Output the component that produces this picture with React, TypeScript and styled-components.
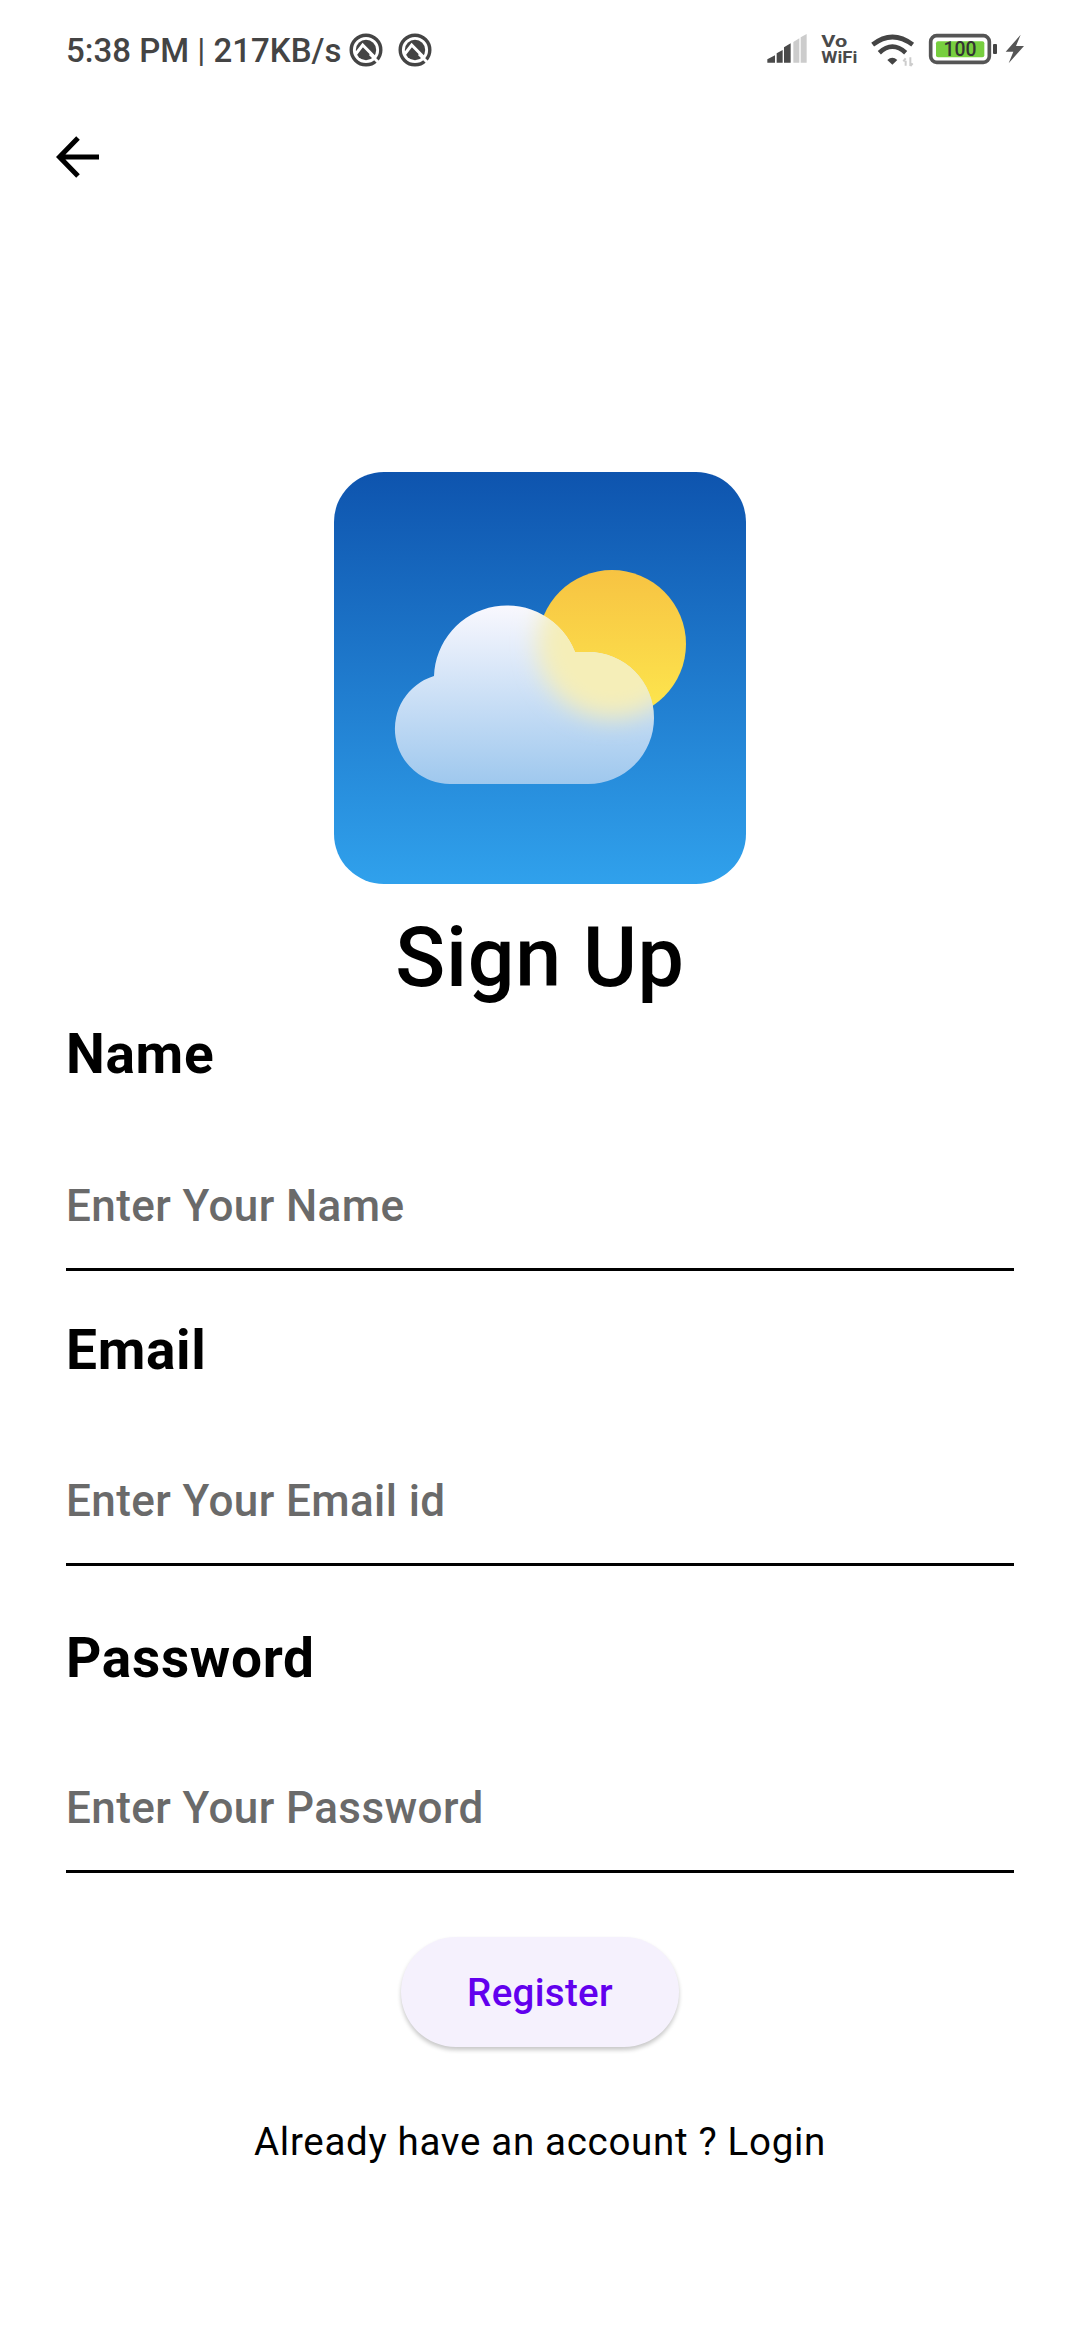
import React from "react";
import styled, { createGlobalStyle } from "styled-components";

const Global = createGlobalStyle`
  html, body { margin: 0; padding: 0; background: #fff; }
  #root { width: 1080px; height: 2340px; }
`;
const Page = styled.div`
  width: 1080px; height: 2340px; background: #fff; overflow: hidden;
  font-family: Roboto, "Liberation Sans", sans-serif; display: flex; flex-direction: column;
`;
const StatusBar = styled.div`
  height: 100px; flex: none; box-sizing: border-box; padding: 0 30px 0 66px; display: flex; align-items: center;
  color: #444; font-size: 33px; font-weight: 500; justify-content: space-between;
`;
const StatusLeft = styled.div`display: flex; align-items: center; white-space: pre;`;
const Thin = styled.span`font-weight: 400;`;
const BlockIcon = styled.svg<{ $ml: number }>`width: 36px; height: 36px; margin-left: ${(p) => p.$ml}px;`;
const BackRow = styled.div`height: 372px; flex: none; box-sizing: border-box; padding: 34px 0 0 52px;`;
const BackIcon = styled.svg`width: 50px; height: 50px; display: block;`;
const Logo = styled.svg`width: 412px; height: 412px; display: block; align-self: center; flex: none;`;
const Title = styled.h1`
  margin: 25px 0 16px; text-align: center; font-size: 82.5px; line-height: 97px; font-weight: 500; color: #000; letter-spacing: .69px;
`;
const Form = styled.div`padding: 0 66px; display: flex; flex-direction: column;`;
const Label = styled.div`font-size: 55px; font-weight: 700; line-height: 64px; color: #000; letter-spacing: .69px;`;
const Field = styled.div<{ $h: number; $mb: number }>`
  height: ${(p) => p.$h}px; box-sizing: border-box; border-bottom: 3px solid #000; display: flex; align-items: flex-end;
  padding-bottom: 36px; margin-bottom: ${(p) => p.$mb}px;
`;
const Input = styled.input`
  border: 0; outline: 0; padding: 0; width: 100%; background: transparent;
  font: 500 44px/52px Roboto, sans-serif; letter-spacing: .41px; height: 52px;
  &::placeholder { color: #6a6a6a; opacity: 1; }
`;
const RegisterWrap = styled.div`display: flex; justify-content: center; margin-top: 64px;`;
const Register = styled.button`
  width: 278px; height: 110px; padding: 0; border: 0; border-radius: 55px; background: #f5f1fd; color: #6200ee;
  font: 500 38.5px Roboto, sans-serif; letter-spacing: .3px; box-shadow: 0 3px 4px rgba(0,0,0,.22);
`;
const Footer = styled.div`text-align: center; margin-top: 72px; font-size: 38.5px; line-height: 45px; color: #000; letter-spacing: .69px;`;
const Icons = styled.svg`width: 310px; height: 60px; display: block;`;

const Block = ({ ml }: { ml: number }) => (
  <BlockIcon $ml={ml} viewBox="0 0 36 36" fill="none">
    <circle cx="18" cy="18" r="14.8" stroke="#444" strokeWidth="3.4" />
    <circle cx="18" cy="18" r="10.2" fill="#444" />
    <path d="M7 23 L14.7 13 L27 25.5" stroke="#fff" strokeWidth="3" />
    <path d="M22 22 L34 34" stroke="#fff" strokeWidth="3" />
  </BlockIcon>
);

export default function App() {
  return (
    <Page>
      <Global />
      <StatusBar>
        <StatusLeft>
          5:38 PM <Thin>|</Thin> 217KB/s
          <Block ml={7} />
          <Block ml={13} />
        </StatusLeft>
        <Icons viewBox="0 0 930 180">
          <path d="M82 128 V118 L105 106 V128 Z M110 128 V100 L128 90 V128 Z M132 128 V82 L152 70 V128 Z" fill="#4a4a4a" />
          <path d="M160 128 V66 L178 55 V128 Z M182 128 V52 L200 42 V128 Z" fill="#ccc" />
          <text x="244" y="80" textLength="78" lengthAdjust="spacingAndGlyphs" fontFamily="Roboto" fontWeight="700" fontSize="50" fill="#4a4a4a">Vo</text>
          <text x="244" y="130" textLength="108" lengthAdjust="spacingAndGlyphs" fontFamily="Roboto" fontWeight="700" fontSize="52" fill="#4a4a4a">WiFi</text>
          <path d="M398 74 Q457 28 518 74" fill="none" stroke="#444" strokeWidth="14" />
          <path d="M418 98 Q457 62 497 98" fill="none" stroke="#444" strokeWidth="14" />
          <path d="M442 120 Q457 106 472 120 L457 134 Z" fill="#444" />
          <path d="M497 122 V137 M490 124 L497 115 M511 138 V112 M511 138 L518 130" stroke="#ccc" strokeWidth="6" fill="none" />
          <rect x="572" y="47" width="176" height="80" rx="18" fill="none" stroke="#555" strokeWidth="11" />
          <rect x="588" y="64" width="145" height="48" rx="6" fill="#77cf3f" />
          <text x="660" y="108" textAnchor="middle" fontFamily="Roboto" fontSize="58" fill="#333">100</text>
          <rect x="759" y="72" width="12" height="30" rx="3" fill="#444" />
          <path d="M842 44 L797 95 L820 95 L806 130 L852 78 L828 78 Z" fill="#555" />
        </Icons>
      </StatusBar>
      <BackRow>
        <BackIcon viewBox="0 0 50 50" fill="none">
          <path d="M47 23 H9 M26 4 L7.5 23 L26 42" stroke="#000" strokeWidth="5" />
        </BackIcon>
      </BackRow>
      <Logo viewBox="0 0 412 412">
        <defs>
          <linearGradient id="bg" x1="0" y1="0" x2="0" y2="1">
            <stop offset="0" stopColor="#0e54ae" />
            <stop offset="1" stopColor="#30a1ec" />
          </linearGradient>
          <linearGradient id="sun" x1="0" y1="0" x2="0" y2="1">
            <stop offset="0" stopColor="#f7c342" />
            <stop offset="1" stopColor="#fde74e" />
          </linearGradient>
          <linearGradient id="cloud" x1="0" y1="0" x2="0" y2="1">
            <stop offset="0" stopColor="#f9f8fe" />
            <stop offset="1" stopColor="#9fc8ee" />
          </linearGradient>
          <clipPath id="cc">
            <path d="M100 204 A73 73 0 0 1 241 180 H254 A66 66 0 0 1 254 312 H116 A55.2 55.2 0 0 1 100 204 Z" />
          </clipPath>
          <filter id="bl" x="-30%" y="-30%" width="160%" height="160%">
            <feGaussianBlur stdDeviation="12" />
          </filter>
        </defs>
        <rect width="412" height="412" rx="50" fill="url(#bg)" />
        <circle cx="278" cy="172" r="74" fill="url(#sun)" />
        <path d="M100 204 A73 73 0 0 1 241 180 H254 A66 66 0 0 1 254 312 H116 A55.2 55.2 0 0 1 100 204 Z" fill="url(#cloud)" />
        <g clipPath="url(#cc)">
          <circle cx="278" cy="172" r="74" fill="#f5eeb8" filter="url(#bl)" />
        </g>
      </Logo>
      <Title>Sign Up</Title>
      <Form>
        <Label>Name</Label>
        <Field $h={185} $mb={47}><Input placeholder="Enter Your Name" /></Field>
        <Label>Email</Label>
        <Field $h={184} $mb={60}><Input placeholder="Enter Your Email id" /></Field>
        <Label>Password</Label>
        <Field $h={183} $mb={0}><Input placeholder="Enter Your Password" /></Field>
        <RegisterWrap><Register>Register</Register></RegisterWrap>
        <Footer>Already have an account ? Login</Footer>
      </Form>
    </Page>
  );
}
